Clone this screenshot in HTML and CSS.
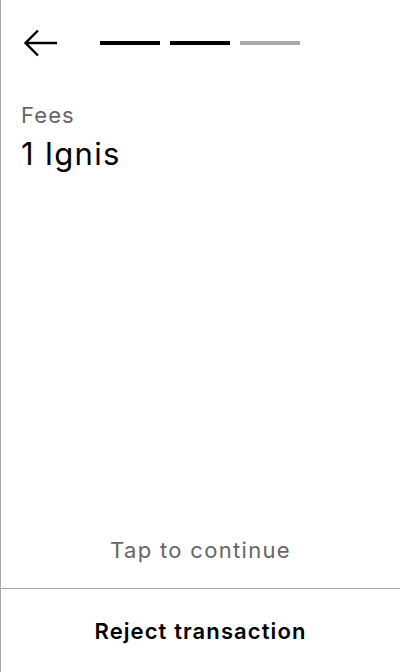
FILE: index.html
```html
<!DOCTYPE html>
<html>
<head>
<meta charset="utf-8">
<link rel="stylesheet" href="styles.css">
</head>
<body>
<div class="screen">
  <div class="header">
    <svg class="back" width="34" height="28" viewBox="0 0 34 28">
      <path d="M34 14H3M15 1.5L2.5 14L15 26.5" fill="none" stroke="#000" stroke-width="2.4"/>
    </svg>
    <div class="steps">
      <span class="step done"></span>
      <span class="step done"></span>
      <span class="step"></span>
    </div>
  </div>
  <div class="content">
    <div class="label">Fees</div>
    <div class="value">1 Ignis</div>
  </div>
  <div class="tap">Tap to continue</div>
  <div class="footer">Reject transaction</div>
</div>
</body>
</html>
```
FILE: styles.css
```css
* { box-sizing: border-box; }
html, body { margin: 0; padding: 0; background: #fff; }
body { font-family: Inter, "Noto Sans", sans-serif; }
.screen {
  width: 400px;
  height: 672px;
  border-left: 1px solid #aaa;
  display: flex;
  flex-direction: column;
}
.header {
  display: flex;
  align-items: center;
  height: 58px;
  padding: 28px 0 0 22px;
}
.back { display: block; }
.steps {
  display: flex;
  gap: 10px;
  margin-left: 43px;
}
.step {
  width: 60px;
  height: 4px;
  background: #aaa;
}
.step.done { background: #000; }
.content {
  padding: 43px 0 0 20px;
  flex: 1;
}
.label {
  font-size: 22px;
  letter-spacing: 0.05em;
  color: #666;
  line-height: 28px;
}
.value {
  font-size: 31px;
  letter-spacing: 0.04em;
  color: #000;
  line-height: 36px;
  margin-top: 7px;
}
.tap {
  text-align: center;
  font-size: 22px;
  letter-spacing: 0.06em;
  color: #666;
  line-height: 28px;
  padding-bottom: 24px;
}
.footer {
  border-top: 1px solid #aaa;
  height: 84px;
  display: flex;
  align-items: center;
  justify-content: center;
  font-size: 22px;
  letter-spacing: 0.05em;
  font-weight: 600;
  color: #000;
}
```
